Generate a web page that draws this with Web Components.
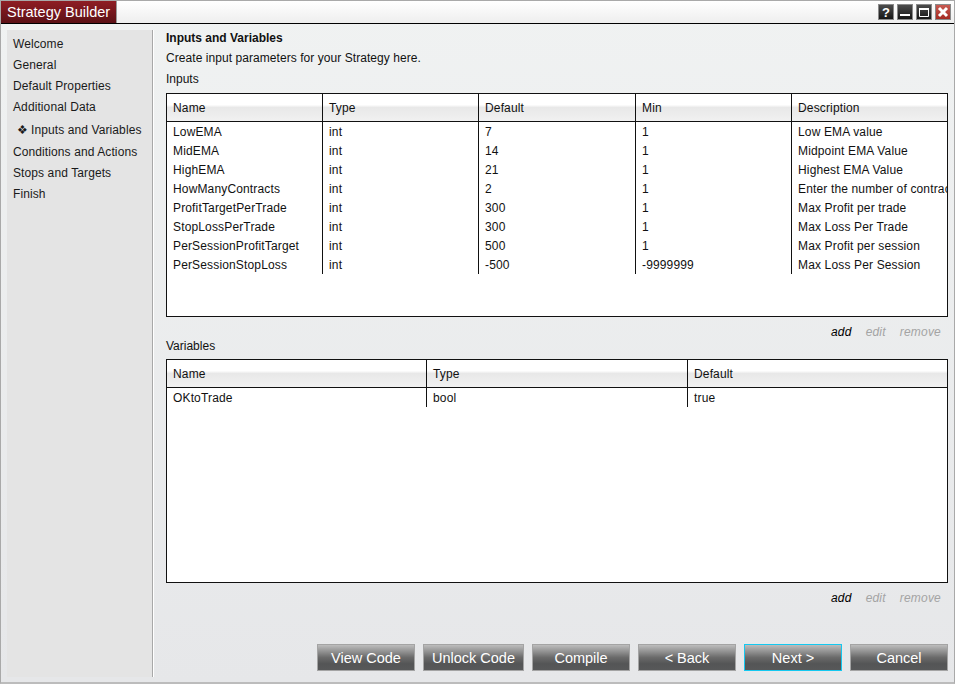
<!DOCTYPE html>
<html>
<head>
<meta charset="utf-8">
<style>
html, body { margin: 0; padding: 0; height: 100%; }
body { font: 12px "Liberation Sans", Arial, sans-serif; color: #111; overflow: hidden; }
</style>
</head>
<body>
<st-window>
    <st-titlebar slot="top" text="Strategy Builder"></st-titlebar>
    <st-sidebar slot="side"></st-sidebar>
    <st-panel slot="main"></st-panel>
</st-window>

<script>
class StWindow extends HTMLElement {
    connectedCallback() {
        const shadowDom = this.attachShadow({ mode: "open" });
        shadowDom.innerHTML = `
            <style>
                :host { display: flex; flex-direction: column; width: 955px; height: 684px; box-sizing: border-box;
                    border: 1px solid #a9a9a9; border-bottom: 2px solid #bcbcbc; background: linear-gradient(#f0f2f2, #e6e7e9); }
                .body { flex: 1; display: flex; min-height: 0; }
            </style>
            <slot name="top"></slot>
            <div class="body">
                <slot name="side"></slot>
                <slot name="main"></slot>
            </div>`;
    }
}

class StTitlebar extends HTMLElement {
    connectedCallback() {
        const shadowDom = this.attachShadow({ mode: "open" });
        shadowDom.innerHTML = `
            <style>
                :host { display: flex; justify-content: space-between; height: 23px; box-sizing: border-box;
                    border-bottom: 1px solid #000; background: linear-gradient(#ffffff, #eeeeee); }
                .tab { width: 115px; height: 22px; color: #fff; font-size: 14.5px; line-height: 22px; padding-left: 6px; box-sizing: border-box;
                    background: linear-gradient(#8f1d24, #5c1116); box-shadow: 1px 0 0 #999; white-space: nowrap; }
                .btns { display: flex; gap: 3px; padding: 3px 3px 0 0; }
                .btn { width: 16px; height: 16px; box-sizing: border-box; border: 1px solid #8a8a8a; background: linear-gradient(#4c4c4c, #161616); display: block; }
                .btn.close { background: linear-gradient(#c75a52, #a42a22); }
                svg { display: block; }
            </style>
            <div class="tab">${this.getAttribute("text")}</div>
            <div class="btns">
                <div class="btn"><svg width="14" height="14"><text x="7" y="12" text-anchor="middle" font-family="Liberation Sans" font-weight="bold" font-size="13" fill="#fff">?</text></svg></div>
                <div class="btn"><svg width="14" height="14"><rect x="2" y="9" width="10" height="2" fill="#fff"/></svg></div>
                <div class="btn"><svg width="14" height="14"><path d="M2.5 3.5h9v8h-9z" fill="none" stroke="#fff"/><path d="M2 3h10v2H2z" fill="#fff"/></svg></div>
                <div class="btn close"><svg width="14" height="14"><path d="M3 3l8 8M11 3l-8 8" stroke="#fff" stroke-width="3"/></svg></div>
            </div>`;
    }
}

class StSidebar extends HTMLElement {
    connectedCallback() {
        const shadowDom = this.attachShadow({ mode: "open" });
        const steps = ["Welcome", "General", "Default Properties", "Additional Data", "*Inputs and Variables", "Conditions and Actions", "Stops and Targets", "Finish"];
        const rows = steps.map(s => s[0] == "*"
            ? `<div class="step on"><span class="mark">\u2756</span>${s.slice(1)}</div>`
            : `<div class="step">${s}</div>`).join("");
        shadowDom.innerHTML = `
            <style>
                :host { display: block; width: 147px; margin: 6px 0 5px 6px; box-sizing: border-box; background: #e4e4e4;
                    border-right: 1px solid #fff; box-shadow: inset -1px 0 0 #a8a8a8; padding-top: 4px; flex: none; letter-spacing: .1px; }
                .step { height: 21px; line-height: 21px; padding-left: 6px; white-space: nowrap; color: #1a1a1a; }
                .step.on { height: 24px; line-height: 25px; padding-left: 10px; }
                .mark { display: inline-block; width: 14px; font-size: 12px; }
            </style>
            ${rows}`;
    }
}

class StGrid extends HTMLElement {
    connectedCallback() {
        const shadowDom = this.attachShadow({ mode: "open" });
        const cols = this.getAttribute("cols");
        const data = JSON.parse(this.getAttribute("data"));
        const n = data[0].length;
        const head = data[0].map(c => `<div class="h">${c}</div>`).join("");
        const body = data.slice(1).map(r => r.map(c => `<div class="c">${c}</div>`).join("")).join("");
        shadowDom.innerHTML = `
            <style>
                :host { display: block; height: 224px; box-sizing: border-box; border: 1px solid #111; background: #fff; overflow: hidden; letter-spacing: .15px; }
                .t { display: grid; grid-template-columns: ${cols}; }
                .h { height: 28px; line-height: 28px; padding-left: 6px; box-sizing: border-box; border-right: 1px solid #111; border-bottom: 1px solid #111;
                    background: linear-gradient(#fff 0, #fff 40%, #e8e8e8 50%, #f1f1f1 100%); white-space: nowrap; overflow: hidden; }
                .c { height: 19px; line-height: 21px; padding-left: 6px; box-sizing: border-box; border-right: 1px solid #111; white-space: nowrap; overflow: hidden; }
                .h:nth-child(${n}n), .c:nth-child(${n}n) { border-right: 0; }
            </style>
            <div class="t">${head}${body}</div>`;
    }
}

class StActions extends HTMLElement {
    connectedCallback() {
        const shadowDom = this.attachShadow({ mode: "open" });
        shadowDom.innerHTML = `
            <style>
                :host { display: flex; justify-content: flex-end; gap: 14px; padding: 8px 7px 0 0; height: 14px; line-height: 14px; font-style: italic; color: #a4a4a4; letter-spacing: .2px; }
                .on { color: #000; }
            </style>
            <span class="on">add</span><span>edit</span><span>remove</span>`;
    }
}

class StButton extends HTMLElement {
    connectedCallback() {
        const shadowDom = this.attachShadow({ mode: "open" });
        shadowDom.innerHTML = `
            <style>
                :host { display: block; box-sizing: border-box; width: 98px; height: 27px; line-height: 26px; text-align: center; font-size: 14.5px; color: #fff;
                    border: 1px solid #a4a4a4; background: linear-gradient(#bdbdbd 0, #6a6a6a 50%, #545556 75%, #575859 100%); white-space: nowrap; }
                :host([focused]) { border-color: #14c8f0; }
                :host([wide]) { width: 101px; }
            </style>
            <slot></slot>`;
    }
}

class StPanel extends HTMLElement {
    connectedCallback() {
        const shadowDom = this.attachShadow({ mode: "open" });
        const inputs = [
            ["Name", "Type", "Default", "Min", "Description"],
            ["LowEMA", "int", "7", "1", "Low EMA value"],
            ["MidEMA", "int", "14", "1", "Midpoint EMA Value"],
            ["HighEMA", "int", "21", "1", "Highest EMA Value"],
            ["HowManyContracts", "int", "2", "1", "Enter the number of contracts"],
            ["ProfitTargetPerTrade", "int", "300", "1", "Max Profit per trade"],
            ["StopLossPerTrade", "int", "300", "1", "Max Loss Per Trade"],
            ["PerSessionProfitTarget", "int", "500", "1", "Max Profit per session"],
            ["PerSessionStopLoss", "int", "-500", "-9999999", "Max Loss Per Session"]
        ];
        const vars = [["Name", "Type", "Default"], ["OKtoTrade", "bool", "true"]];
        shadowDom.innerHTML = `
            <style>
                :host { flex: 1; display: flex; flex-direction: column; min-width: 0; padding: 6px 6px 11px 12px; }
                .title { font-weight: bold; height: 20px; line-height: 16px; }
                .line { height: 21px; line-height: 17px; letter-spacing: .06px; }
                .label { height: 16px; line-height: 17px; }
                .vars { height: 14px; line-height: 14px; margin-bottom: 6px; }
                .foot { margin-top: auto; display: flex; justify-content: flex-end; gap: 8px; }
            </style>
            <div class="title">Inputs and Variables</div>
            <div class="line">Create input parameters for your Strategy here.</div>
            <div class="label">Inputs</div>
            <st-grid style="margin-top:6px" cols="156px 156px 157px 156px 1fr" data='${JSON.stringify(inputs)}'></st-grid>
            <st-actions></st-actions>
            <div class="vars">Variables</div>
            <st-grid cols="260px 261px 1fr" data='${JSON.stringify(vars)}'></st-grid>
            <st-actions></st-actions>
            <div class="foot">
                <st-button>View Code</st-button>
                <st-button wide>Unlock Code</st-button>
                <st-button>Compile</st-button>
                <st-button>&lt; Back</st-button>
                <st-button focused>Next &gt;</st-button>
                <st-button>Cancel</st-button>
            </div>`;
    }
}

customElements.define("st-button", StButton);
customElements.define("st-actions", StActions);
customElements.define("st-grid", StGrid);
customElements.define("st-panel", StPanel);
customElements.define("st-sidebar", StSidebar);
customElements.define("st-titlebar", StTitlebar);
customElements.define("st-window", StWindow);
</script>
</body>
</html>
